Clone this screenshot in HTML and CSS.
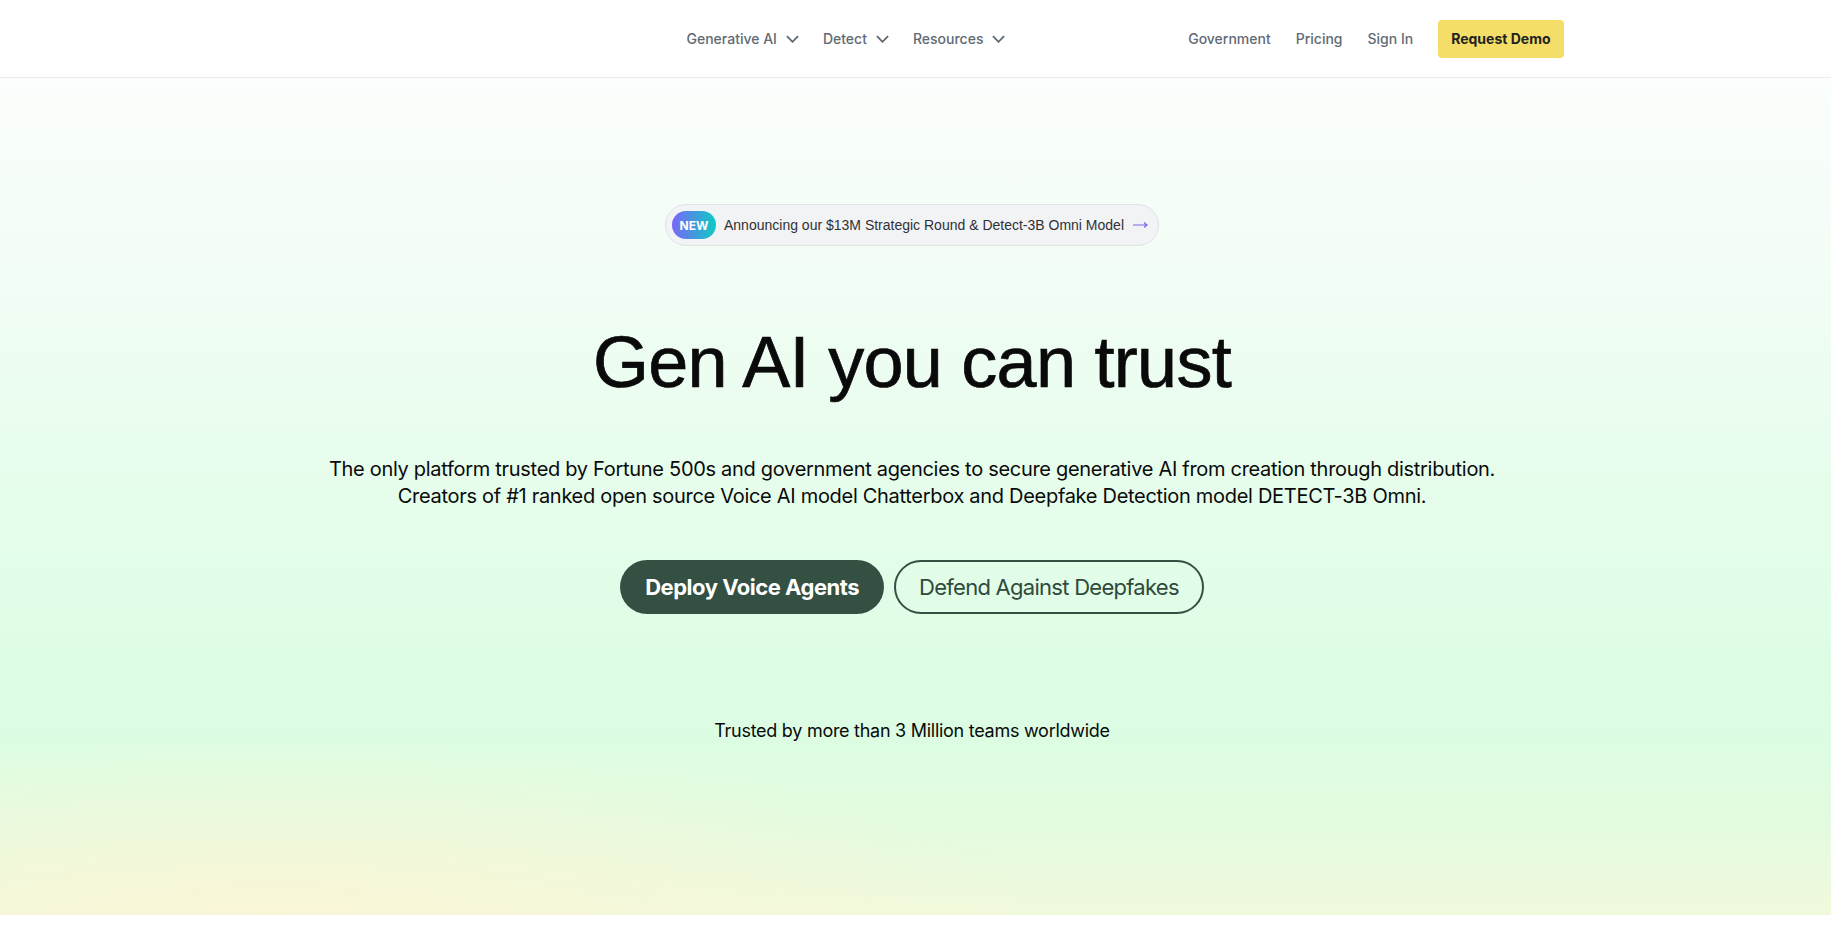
FILE: index.html
```html
<!DOCTYPE html>
<html lang="en">
<head>
  <meta charset="UTF-8">
  <meta name="viewport" content="width=device-width, initial-scale=1.0">
  <title>Gen AI you can trust</title>
  <link rel="stylesheet" href="styles.css">
</head>
<body>
  <header class="site-header">
    <div class="nav-inner">
      <a class="logo" href="#" aria-label="Home"></a>

      <nav class="menu">
        <a href="#" class="menu-item">Generative AI
          <svg class="chevron" viewBox="0 0 14 8"><path d="M1 1l6 6 6-6"/></svg>
        </a>
        <a href="#" class="menu-item">Detect
          <svg class="chevron" viewBox="0 0 14 8"><path d="M1 1l6 6 6-6"/></svg>
        </a>
        <a href="#" class="menu-item">Resources
          <svg class="chevron" viewBox="0 0 14 8"><path d="M1 1l6 6 6-6"/></svg>
        </a>
      </nav>

      <div class="nav-right">
        <a href="#" class="nav-link">Government</a>
        <a href="#" class="nav-link">Pricing</a>
        <a href="#" class="nav-link">Sign In</a>
        <a href="#" class="demo-button">Request Demo</a>
      </div>
    </div>
  </header>

  <section class="hero">
    <a href="#" class="announce">
      <span class="announce-tag">NEW</span>
      <span class="announce-text">Announcing our $13M Strategic Round &amp; Detect-3B Omni Model</span>
      <svg class="announce-arrow" viewBox="0 0 15 8"><path d="M0 4h14M11 1.5l3 2.5-3 2.5"/></svg>
    </a>

    <h1 class="hero-title">Gen AI you can trust</h1>

    <p class="hero-text">
      The only platform trusted by Fortune 500s and government agencies to secure generative AI from creation through distribution.<br>
      Creators of #1 ranked open source Voice AI model Chatterbox and Deepfake Detection model DETECT-3B Omni.
    </p>

    <div class="hero-actions">
      <a href="#" class="btn btn-solid">Deploy Voice Agents</a>
      <a href="#" class="btn btn-outline">Defend Against Deepfakes</a>
    </div>

    <p class="trusted">Trusted by more than 3 Million teams worldwide</p>
  </section>
</body>
</html>
```

FILE: styles.css
```css
* {
  box-sizing: border-box;
}

body {
  margin: 0;
  font-family: Inter, "Noto Sans", Arial, sans-serif;
  color: #0a0a0a;
  background-color: #fff;
}

a {
  text-decoration: none;
  color: inherit;
}

/* header */

.site-header {
  height: 78px;
  background-color: #fff;
  border-bottom: 1px solid #ececec;
}

.nav-inner {
  max-width: 1296px;
  height: 100%;
  margin: 0 auto;
  display: flex;
  align-items: center;
}

.logo {
  display: block;
  width: 419px;
  height: 32px;
}

.menu {
  display: flex;
  align-items: center;
  gap: 24px;
}

.menu-item,
.nav-link {
  font-size: 14px;
  font-weight: 500;
  color: #616a74;
}

.menu-item {
  display: flex;
  align-items: center;
  gap: 9px;
}

.chevron {
  width: 13px;
  height: 8px;
  fill: none;
  stroke: #616a74;
  stroke-width: 2;
}

.nav-right {
  margin-left: auto;
  display: flex;
  align-items: center;
  gap: 25px;
}

.demo-button {
  display: block;
  height: 38px;
  line-height: 38px;
  padding: 0 13px;
  border-radius: 4px;
  background-color: #f5de68;
  color: #222;
  font-size: 14px;
  font-weight: 700;
}

/* hero */

.hero {
  height: 837px;
  padding: 126px 7px 0 0;
  display: flex;
  flex-direction: column;
  align-items: center;
  text-align: center;
  background:
    radial-gradient(ellipse 60% 30% at 15% 100%, rgba(250, 246, 214, 0.9), rgba(250, 246, 214, 0) 70%),
    linear-gradient(180deg, #fbfefc 0%, #f0fdf4 28%, #e3fde9 55%, #dcfde3 78%, #e4fbe0 90%, #f1f9dc 100%);
}

.announce {
  display: flex;
  align-items: center;
  height: 42px;
  padding: 0 10px 0 6px;
  border: 1px solid #e0e3e7;
  border-radius: 21px;
  background-color: #f2f3f5;
}

.announce-tag {
  display: flex;
  align-items: center;
  justify-content: center;
  width: 44px;
  height: 28px;
  border-radius: 14px;
  background: linear-gradient(90deg, #7a66f7, #0ccbc4);
  color: #fff;
  font-size: 12px;
  font-weight: 700;
}

.announce-text {
  margin-left: 8px;
  font-family: "Liberation Sans", Arial, sans-serif;
  font-size: 14px;
  color: #2f3136;
}

.announce-arrow {
  width: 15px;
  height: 8px;
  margin-left: 9px;
  fill: none;
  stroke: #7a66f0;
  stroke-width: 1.2;
}

.hero-title {
  margin: 76px 0 0;
  font-family: "Liberation Sans", Arial, sans-serif;
  font-size: 72px;
  line-height: 80px;
  font-weight: 400;
  letter-spacing: -0.01em;
  -webkit-text-stroke: 0.7px #0a0a0a;
}

.hero-text {
  margin: 54px 0 0;
  font-size: 20px;
  line-height: 27px;
  letter-spacing: -0.015em;
  color: #0a0a0a;
}

.hero-actions {
  margin-top: 50px;
  display: flex;
  gap: 10px;
}

.btn {
  display: flex;
  align-items: center;
  height: 54px;
  padding: 0 25px;
  border-radius: 27px;
  font-size: 22px;
  letter-spacing: -0.022em;
}

.btn-solid {
  background-color: #345043;
  color: #fff;
  font-weight: 700;
}

.btn-outline {
  border: 2px solid #345043;
  padding: 0 23px;
  color: #2f4a3c;
  font-weight: 400;
  letter-spacing: -0.033em;
}

.trusted {
  margin: 104px 0 0;
  font-size: 18px;
  line-height: 26px;
  letter-spacing: -0.015em;
}
```
